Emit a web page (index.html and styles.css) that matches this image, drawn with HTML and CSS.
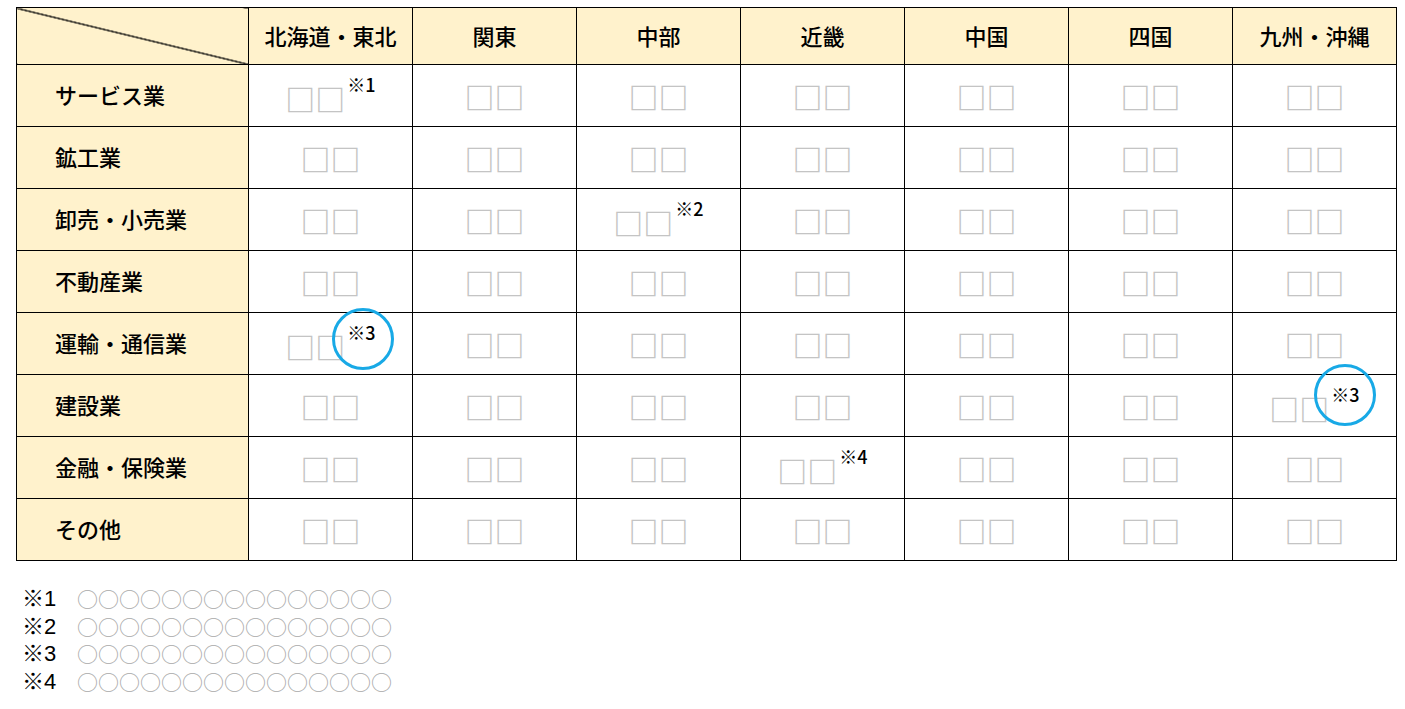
FILE: index.html
```html
<!DOCTYPE html>
<html lang="ja">
<head>
  <meta charset="UTF-8">
  <meta name="viewport" content="width=device-width, initial-scale=1.0">
  <title>業種別・地域別一覧</title>
  <link rel="stylesheet" href="styles.css">
</head>
<body>
  <table class="grid">
    <colgroup>
      <col class="col-head">
      <col class="col-area">
      <col class="col-area">
      <col class="col-area">
      <col class="col-area">
      <col class="col-area">
      <col class="col-area">
      <col class="col-area">
    </colgroup>
    <thead>
      <tr>
        <th class="corner"></th>
        <th>北海道・東北</th>
        <th>関東</th>
        <th>中部</th>
        <th>近畿</th>
        <th>中国</th>
        <th>四国</th>
        <th>九州・沖縄</th>
      </tr>
    </thead>
    <tbody>
      <tr>
        <th>サービス業</th>
        <td><span class="val">□□</span><sup class="note">※1</sup></td>
        <td><span class="val">□□</span></td>
        <td><span class="val">□□</span></td>
        <td><span class="val">□□</span></td>
        <td><span class="val">□□</span></td>
        <td><span class="val">□□</span></td>
        <td><span class="val">□□</span></td>
      </tr>
      <tr>
        <th>鉱工業</th>
        <td><span class="val">□□</span></td>
        <td><span class="val">□□</span></td>
        <td><span class="val">□□</span></td>
        <td><span class="val">□□</span></td>
        <td><span class="val">□□</span></td>
        <td><span class="val">□□</span></td>
        <td><span class="val">□□</span></td>
      </tr>
      <tr>
        <th>卸売・小売業</th>
        <td><span class="val">□□</span></td>
        <td><span class="val">□□</span></td>
        <td><span class="val">□□</span><sup class="note">※2</sup></td>
        <td><span class="val">□□</span></td>
        <td><span class="val">□□</span></td>
        <td><span class="val">□□</span></td>
        <td><span class="val">□□</span></td>
      </tr>
      <tr>
        <th>不動産業</th>
        <td><span class="val">□□</span></td>
        <td><span class="val">□□</span></td>
        <td><span class="val">□□</span></td>
        <td><span class="val">□□</span></td>
        <td><span class="val">□□</span></td>
        <td><span class="val">□□</span></td>
        <td><span class="val">□□</span></td>
      </tr>
      <tr>
        <th>運輸・通信業</th>
        <td><span class="val">□□</span><sup class="note marked">※3</sup></td>
        <td><span class="val">□□</span></td>
        <td><span class="val">□□</span></td>
        <td><span class="val">□□</span></td>
        <td><span class="val">□□</span></td>
        <td><span class="val">□□</span></td>
        <td><span class="val">□□</span></td>
      </tr>
      <tr>
        <th>建設業</th>
        <td><span class="val">□□</span></td>
        <td><span class="val">□□</span></td>
        <td><span class="val">□□</span></td>
        <td><span class="val">□□</span></td>
        <td><span class="val">□□</span></td>
        <td><span class="val">□□</span></td>
        <td><span class="val">□□</span><sup class="note marked high">※3</sup></td>
      </tr>
      <tr>
        <th>金融・保険業</th>
        <td><span class="val">□□</span></td>
        <td><span class="val">□□</span></td>
        <td><span class="val">□□</span></td>
        <td><span class="val">□□</span><sup class="note">※4</sup></td>
        <td><span class="val">□□</span></td>
        <td><span class="val">□□</span></td>
        <td><span class="val">□□</span></td>
      </tr>
      <tr>
        <th>その他</th>
        <td><span class="val">□□</span></td>
        <td><span class="val">□□</span></td>
        <td><span class="val">□□</span></td>
        <td><span class="val">□□</span></td>
        <td><span class="val">□□</span></td>
        <td><span class="val">□□</span></td>
        <td><span class="val">□□</span></td>
      </tr>
    </tbody>
  </table>

  <ul class="notes">
    <li><span class="mark">※1</span><span class="dots">○○○○○○○○○○○○○○○</span></li>
    <li><span class="mark">※2</span><span class="dots">○○○○○○○○○○○○○○○</span></li>
    <li><span class="mark">※3</span><span class="dots">○○○○○○○○○○○○○○○</span></li>
    <li><span class="mark">※4</span><span class="dots">○○○○○○○○○○○○○○○</span></li>
  </ul>
</body>
</html>
```

FILE: styles.css
```css
body {
  font-family: "Noto Sans CJK JP", "Noto Sans", sans-serif;
  background-color: #fff;
  color: #000;
  margin: 7px 0 0 16px;
}
.grid {
  border-collapse: collapse;
  table-layout: fixed;
  width: 1381px;
}
.col-head {
  width: 232px;
}
.col-area {
  width: 164px;
}
.grid th,
.grid td {
  border: 1px solid #000;
  padding: 0;
  height: 61px;
}
.grid thead th {
  height: 54px;
  background: #fff2cc;
  font-size: 22px;
  font-weight: 500;
  text-align: center;
  padding-bottom: 2px;
}
.grid thead th.corner {
  background: linear-gradient(to top right, #fff2cc calc(50% - 0.9px), #000 calc(50% - 0.4px), #000 calc(50% + 0.4px), #fff2cc calc(50% + 0.9px));
}
.grid tbody th {
  height: 57px;
  background: #fff2cc;
  font-size: 22px;
  font-weight: 500;
  text-align: left;
  padding: 0 0 4px 38px;
}
.grid td {
  text-align: center;
  white-space: nowrap;
}
.val {
  font-size: 30px;
  font-weight: 700;
  color: #c4c4c4;
  vertical-align: middle;
}
.note {
  position: relative;
  font-size: 18px;
  font-weight: 500;
  vertical-align: 10px;
  margin-left: 2px;
}
.note.marked::after {
  content: "";
  position: absolute;
  left: 50%;
  top: 50%;
  width: 56px;
  height: 56px;
  margin: -24px 0 0 -29px;
  border: 3px solid #18a9e6;
  border-radius: 50%;
}
.note.high::after {
  margin: -30px 0 0 -31px;
}
.notes {
  list-style: none;
  margin: 24px 0 0 6px;
  padding: 0;
}
.notes li {
  display: flex;
  align-items: center;
  height: 27.7px;
  line-height: 27.7px;
  font-size: 22px;
}
.mark {
  width: 55px;
  font-family: "Liberation Sans", "Noto Sans CJK JP", sans-serif;
}
.dots {
  font-size: 21px;
  color: #a9a9a9;
}
```
